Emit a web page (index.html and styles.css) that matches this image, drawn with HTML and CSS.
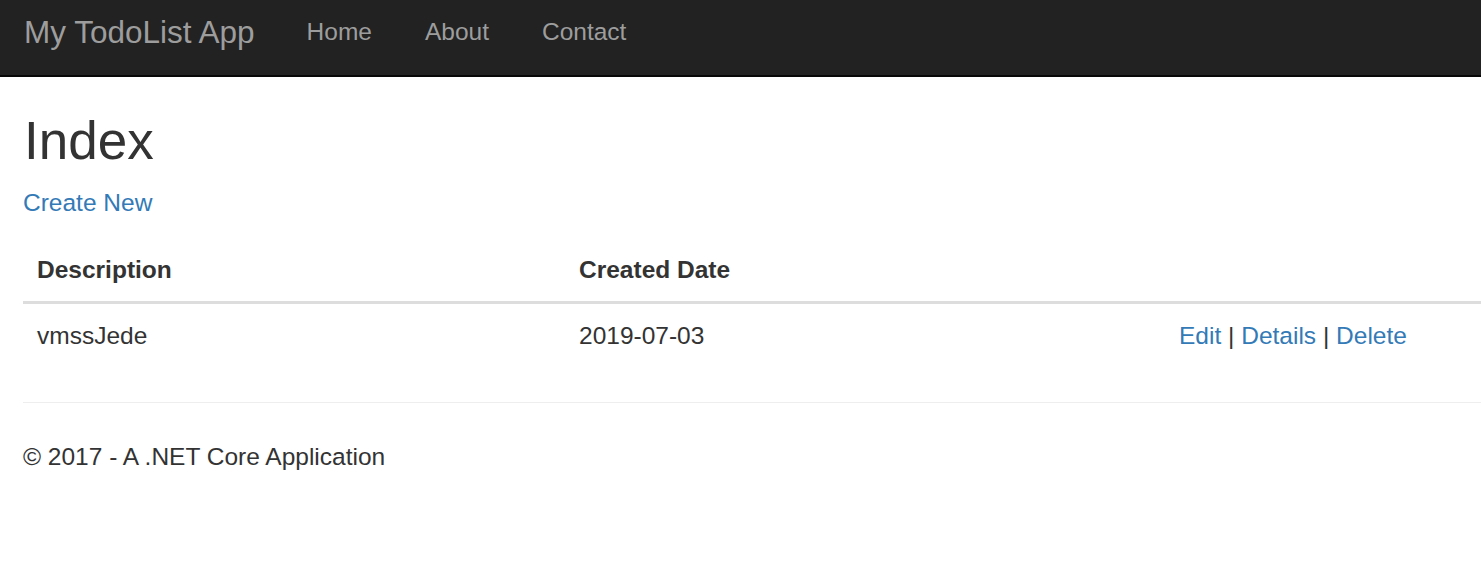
FILE: index.html
```html
<!DOCTYPE html>
<html lang="en">
<head>
<meta charset="utf-8">
<title>Index - My TodoList App</title>
<link rel="stylesheet" href="styles.css">
</head>
<body>
<nav class="navbar">
  <a class="brand" href="#">My TodoList App</a>
  <ul class="nav">
    <li><a href="#">Home</a></li>
    <li><a href="#">About</a></li>
    <li><a href="#">Contact</a></li>
  </ul>
</nav>
<main class="content">
  <h1 class="title">Index</h1>
  <p class="actions"><a href="#">Create New</a></p>
  <table class="table">
    <colgroup>
      <col class="col-desc">
      <col class="col-date">
      <col>
    </colgroup>
    <thead>
      <tr>
        <th>Description</th>
        <th>Created Date</th>
        <th></th>
      </tr>
    </thead>
    <tbody>
      <tr>
        <td>vmssJede</td>
        <td>2019-07-03</td>
        <td><a href="#">Edit</a> | <a href="#">Details</a> | <a href="#">Delete</a></td>
      </tr>
    </tbody>
  </table>
  <hr class="rule">
  <footer class="footer">
    <p>&copy; 2017 - A .NET Core Application</p>
  </footer>
</main>
</body>
</html>
```

FILE: styles.css
```css
* { box-sizing: border-box; }

html, body {
  margin: 0;
  padding: 0;
}

body {
  font-family: "Liberation Sans", Arial, Helvetica, sans-serif;
  font-size: 24.5px;
  line-height: 34px;
  color: #333333;
  background: #ffffff;
}

a {
  color: #337ab7;
  text-decoration: none;
}

.navbar {
  display: flex;
  align-items: flex-start;
  height: 77px;
  padding: 15px 0 0 24px;
  background: #222222;
  border-bottom: 2px solid #080808;
}

.brand {
  font-size: 31.5px;
  line-height: 34px;
  color: #9d9d9d;
  margin-right: 25px;
}

.nav {
  display: flex;
  list-style: none;
  margin: 0;
  padding: 0;
}

.nav a {
  display: block;
  padding: 0 27px 0 27px;
  color: #9d9d9d;
  font-size: 24.5px;
  line-height: 34px;
}

.nav li + li a {
  padding-left: 26px;
}

.content {
  padding: 36px 0 0 23px;
}

.title {
  margin: 0 0 18px 0;
  padding-left: 1px;
  font-size: 53px;
  line-height: 55px;
  font-weight: 500;
}

.actions {
  margin: 0 0 19px 0;
}

.table {
  width: 100%;
  border-collapse: collapse;
  table-layout: fixed;
  margin: 0;
}

.col-desc { width: 542px; }
.col-date { width: 600px; }

.table th {
  text-align: left;
  font-weight: bold;
  padding: 14px;
  border-bottom: 3px solid #dddddd;
  vertical-align: bottom;
}

.table td {
  padding: 15px 14px 13px 14px;
  vertical-align: top;
}

.rule {
  margin: 36px 0 0 0;
  border: 0;
  border-top: 1px solid #eeeeee;
  height: 0;
}

.footer p {
  margin: 37px 0 0 0;
}
```
